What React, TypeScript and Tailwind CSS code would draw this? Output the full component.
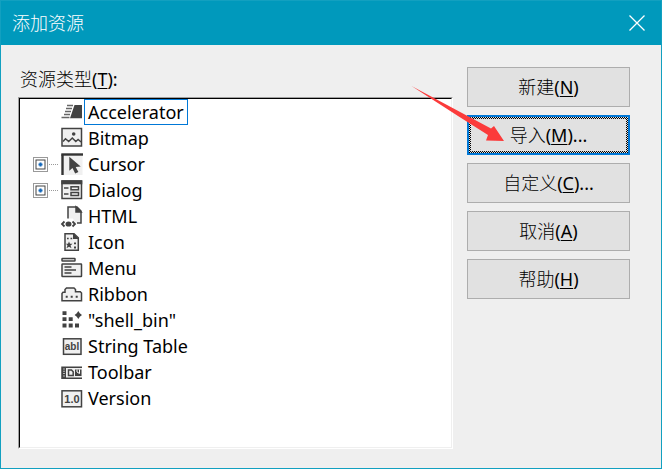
import type { ReactNode } from "react";

const INK = "#424242";
const PAPER = "#f0f0f0";

function AccessKey({ children }: { children: string }) {
  return <span className="underline decoration-1 underline-offset-2">{children}</span>;
}

function Glyph({ children }: { children: ReactNode }) {
  return (
    <svg width="24" height="26" viewBox="0 0 24 26" fill="none" stroke={INK} strokeWidth="1.5" className="shrink-0" aria-hidden="true">
      {children}
    </svg>
  );
}

const icons = {
  accelerator: (
    <Glyph>
      <path d="M14.5 6H22v13.300H10z" fill={INK} stroke="none" />
      <path d="M7 6.500h6M6 9.500h6M5 12.500h6M4 15.500h6M1.500 18.500h8" stroke="#666" strokeWidth="1.600" />
    </Glyph>
  ),
  bitmap: (
    <Glyph>
      <rect x="2" y="3.500" width="19.5" height="17.5" fill={PAPER} />
      <path d="M3 16.500l2.500-2.800 3.200 2.800 3.600-3.500 3.500 3.500 2.300-2 3 2.500" />
      <circle cx="13.700" cy="9" r="1.800" fill={INK} stroke="none" />
    </Glyph>
  ),
  cursor: (
    <Glyph>
      <rect x="3" y="4" width="19.500" height="20" fill={PAPER} stroke="none" />
      <path d="M1.300 3.500H23" stroke="#333" strokeWidth="2.400" />
      <path d="M2.500 3.500V24" stroke="#333" strokeWidth="2.400" />
      <path d="M9.300 5.700v14l3.200-2.700 2.700 5.500 3.200-1.500-2.700-5 5-0.500z" fill={INK} stroke="none" />
    </Glyph>
  ),
  dialog: (
    <Glyph>
      <rect x="2" y="4" width="19.500" height="17.500" fill={PAPER} />
      <path d="M1.300 5.300h21" strokeWidth="4" />
      <path d="M4 11h4.500M4 17h4.500" />
      <rect x="11" y="9.800" width="7.500" height="3" />
      <rect x="11" y="15.500" width="7.500" height="3" />
    </Glyph>
  ),
  html: (
    <Glyph>
      <path d="M8 15.500V4h9l4 4v12h-6l-2-4.500z" fill={PAPER} stroke="none" />
      <path d="M8 15.500V4h9l4 4v12h-4" />
      <path d="M16 4v5h5z" fill={INK} />
      <path d="M4.500 18.500L2 21l2.500 2.500M12.500 18.500L15 21l-2.500 2.500" strokeWidth="1.800" />
      <ellipse cx="8.500" cy="21" rx="3" ry="2.600" fill={INK} stroke="none" />
    </Glyph>
  ),
  icon: (
    <Glyph>
      <path d="M5 4.800h9l4.300 4v12.500H5z" fill={PAPER} />
      <path d="M13 4v6h6z" fill={INK} stroke="none" />
      <path d="M7 9.500h1.700M10.500 9.500h1.700" strokeWidth="1.700" />
      <path d="M9 12.500l1 2.200h2.500l-2 1.700 1 2.800-2.500-1.500-2.500 1.500 1-2.800-1.500-1.700h2z" fill={INK} stroke="none" />
      <path d="M14 14.300h2M14 18.500h2" strokeWidth="1.800" />
    </Glyph>
  ),
  menu: (
    <Glyph>
      <rect x="2" y="3.500" width="13" height="2.600" rx="0.500" fill={PAPER} />
      <rect x="2" y="9" width="19.500" height="12.500" rx="0.500" fill={PAPER} />
      <path d="M4.500 12h7M4.500 15h11.500M4.500 18h7" strokeWidth="1.300" />
    </Glyph>
  ),
  ribbon: (
    <Glyph>
      <path d="M2 19.800v-7.300l1-1.200h2V8.500L6.500 7H14l1.500 1.500v2.300h4.800l1.200 1.200v7.800z" fill={PAPER} />
      <path d="M5.700 15.700h2M10.700 15.700h2M15.700 15.700h2" strokeWidth="2" />
    </Glyph>
  ),
  custom: (
    <Glyph>
      <path d="M2.500 4.300h4v3.700h-4zM2.500 10.300h4v3.700h-4zM8.700 10.300h4v3.700h-4zM2.500 16.500h4v4h-4zM8.700 16.500h4v4h-4zM15 16.500h4v4h-4zM18.300 4l1.500 2.300L22 8l-2.200 1.700-1.500 2.300-1.500-2.300L14.600 8l2.200-1.700z" fill={INK} stroke="none" />
    </Glyph>
  ),
  stringTable: (
    <Glyph>
      <rect x="3.500" y="5.800" width="17.500" height="15.500" fill={PAPER} />
      <text x="12" y="17" textAnchor="middle" fill={INK} stroke="none" fontFamily="Liberation Sans, sans-serif" fontWeight="bold" fontSize="10">abl</text>
    </Glyph>
  ),
  toolbar: (
    <Glyph>
      <path d="M22 8.300H2v10.900h20" fill={PAPER} />
      <path d="M2 8h4v11H2z" fill={INK} stroke="none" />
      <path d="M4 9.500v8" stroke="#fff" strokeWidth="1.200" strokeDasharray="1 1.300" />
      <path d="M8.500 11h3l1.700 1.700v3.800H8.500z" />
      <path d="M15 10.500h6.500v6.500H15z" fill={INK} stroke="none" />
      <path d="M17 10.500v2.500l2.500 1.500v-4" stroke="#fff" strokeWidth="1" />
    </Glyph>
  ),
  version: (
    <Glyph>
      <rect x="2" y="5.800" width="19.500" height="16" fill={PAPER} />
      <text x="12" y="18" textAnchor="middle" fill={INK} stroke="none" fontFamily="Liberation Sans, sans-serif" fontWeight="bold" fontSize="11">1.0</text>
    </Glyph>
  ),
};

type Resource = { label: string; icon: ReactNode; expandable?: boolean; focused?: boolean };

const resources: Resource[] = [
  { label: "Accelerator", icon: icons.accelerator, focused: true },
  { label: "Bitmap", icon: icons.bitmap },
  { label: "Cursor", icon: icons.cursor, expandable: true },
  { label: "Dialog", icon: icons.dialog, expandable: true },
  { label: "HTML", icon: icons.html },
  { label: "Icon", icon: icons.icon },
  { label: "Menu", icon: icons.menu },
  { label: "Ribbon", icon: icons.ribbon },
  { label: '"shell_bin"', icon: icons.custom },
  { label: "String Table", icon: icons.stringTable },
  { label: "Toolbar", icon: icons.toolbar },
  { label: "Version", icon: icons.version },
];

function Expander({ label }: { label: string }) {
  return (
    <button type="button" aria-label={`展开 ${label}`} className="flex h-full w-full items-center">
      <svg width="27" height="26" viewBox="0 0 27 26" fill="none" aria-hidden="true">
        <rect x="0.500" y="6.500" width="14" height="14" fill="#fff" stroke="#999" />
        <rect x="3" y="9" width="9" height="9" stroke="#444" />
        <path d="M5.500 13.500h4M7.500 11.500v4" stroke="#1669bb" strokeWidth="2" />
        <path d="M16 13.500h10" stroke="#999" strokeDasharray="1 1" />
      </svg>
    </button>
  );
}

function TreeRow({ item }: { item: Resource }) {
  return (
    <li role="treeitem" aria-expanded={item.expandable ? false : undefined} aria-selected={!!item.focused} className="flex h-[26px] items-center">
      <span className="h-full w-[27px]">{item.expandable && <Expander label={item.label} />}</span>
      {item.icon}
      <span className={`flex h-full items-center border px-[3px] ${item.focused ? "border-[#0078d7]" : "border-transparent"}`}>{item.label}</span>
    </li>
  );
}

const actions = [
  { text: "新建", accessKey: "N", tail: "" },
  { text: "导入", accessKey: "M", tail: "...", primary: true },
  { text: "自定义", accessKey: "C", tail: "..." },
  { text: "取消", accessKey: "A", tail: "" },
  { text: "帮助", accessKey: "H", tail: "" },
];

export default function App() {
  return (
    <div className="relative flex min-h-screen flex-col border border-[#12a0c0] bg-[#efefef] font-['Noto_Sans','Noto_Sans_CJK_SC',sans-serif] text-lg leading-6 text-black">
      <header className="flex h-11 items-center justify-between bg-[#0099bc] pl-[11px] text-white">
        <h1 className="font-light">添加资源</h1>
        <button type="button" aria-label="关闭" className="flex h-full w-[49px] items-center justify-center">
          <svg width="16" height="16" viewBox="0 0 16 16" stroke="currentColor" strokeWidth="1.300" aria-hidden="true">
            <path d="M0.500 0.500l15 15M15.500 0.500l-15 15" />
          </svg>
        </button>
      </header>

      <main className="flex flex-1 gap-3.5 pt-[22px] pr-[31px] pb-[19px] pl-[17px]">
        <section className="flex flex-1 flex-col">
          <h2 id="types" className="mb-1.5 pl-0.5 font-light">
            资源类型<span className="font-normal">(<AccessKey>T</AccessKey>):</span>
          </h2>
          <div className="flex flex-1 flex-col border border-t-[#a0a0a0] border-r-white border-b-white border-l-[#a0a0a0]">
            <ul role="tree" aria-labelledby="types" className="flex-1 border border-t-black border-r-[#efefef] border-b-[#efefef] border-l-black bg-white pl-[13px]">
              {resources.map((item) => (
                <TreeRow key={item.label} item={item} />
              ))}
            </ul>
          </div>
        </section>

        <div className="flex w-[163px] flex-col gap-2">
          {actions.map((a) => (
            <button
              key={a.text}
              type="button"
              className={`h-10 font-light ${a.primary ? "border-2 border-[#0078d7] bg-[repeating-conic-gradient(#000_0_25%,#e1e1e1_0_50%)] bg-size-[2px_2px] p-0.5" : "border border-[#adadad] bg-[#e1e1e1]"}`}
            >
              <span className="flex h-full items-center justify-center bg-[#e1e1e1]">
                {a.text}
                <span className="font-normal">(<AccessKey>{a.accessKey}</AccessKey>){a.tail}</span>
              </span>
            </button>
          ))}
        </div>
      </main>

      <svg className="pointer-events-none absolute top-[84px] right-[156px]" width="95" height="60" viewBox="0 0 95 60" fill="#fb3b3b" aria-hidden="true">
        <path d="M1.500 1L81 43.500l3-2.500L94 56l-18-0.500 2-5.500L48 31z" />
      </svg>
    </div>
  );
}
